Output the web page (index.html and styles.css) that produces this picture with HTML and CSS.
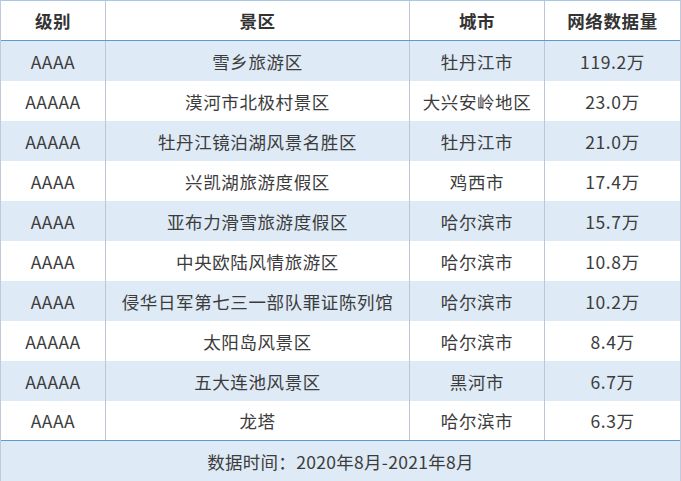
FILE: index.html
```html
<!DOCTYPE html>
<html lang="zh">
<head>
<meta charset="utf-8">
<link rel="stylesheet" href="styles.css">
</head>
<body>
<div class="table">
  <div class="row head">
    <div class="cell">级别</div>
    <div class="cell">景区</div>
    <div class="cell">城市</div>
    <div class="cell">网络数据量</div>
  </div>
  <div class="body">
    <div class="row alt"><div class="cell">AAAA</div><div class="cell">雪乡旅游区</div><div class="cell">牡丹江市</div><div class="cell">119.2万</div></div>
    <div class="row"><div class="cell">AAAAA</div><div class="cell">漠河市北极村景区</div><div class="cell">大兴安岭地区</div><div class="cell">23.0万</div></div>
    <div class="row alt"><div class="cell">AAAAA</div><div class="cell">牡丹江镜泊湖风景名胜区</div><div class="cell">牡丹江市</div><div class="cell">21.0万</div></div>
    <div class="row"><div class="cell">AAAA</div><div class="cell">兴凯湖旅游度假区</div><div class="cell">鸡西市</div><div class="cell">17.4万</div></div>
    <div class="row alt"><div class="cell">AAAA</div><div class="cell">亚布力滑雪旅游度假区</div><div class="cell">哈尔滨市</div><div class="cell">15.7万</div></div>
    <div class="row"><div class="cell">AAAA</div><div class="cell">中央欧陆风情旅游区</div><div class="cell">哈尔滨市</div><div class="cell">10.8万</div></div>
    <div class="row alt"><div class="cell">AAAA</div><div class="cell">侵华日军第七三一部队罪证陈列馆</div><div class="cell">哈尔滨市</div><div class="cell">10.2万</div></div>
    <div class="row"><div class="cell">AAAAA</div><div class="cell">太阳岛风景区</div><div class="cell">哈尔滨市</div><div class="cell">8.4万</div></div>
    <div class="row alt"><div class="cell">AAAAA</div><div class="cell">五大连池风景区</div><div class="cell">黑河市</div><div class="cell">6.7万</div></div>
    <div class="row"><div class="cell">AAAA</div><div class="cell">龙塔</div><div class="cell">哈尔滨市</div><div class="cell">6.3万</div></div>
  </div>
  <div class="foot">数据时间：2020年8月-2021年8月</div>
</div>
</body>
</html>
```
FILE: styles.css
```css
html, body {
  margin: 0;
  padding: 0;
  background: #ffffff;
}
.table {
  width: 681px;
  box-sizing: border-box;
  border-top: 1px solid #a9c6e6;
  border-left: 1px solid #c3c9dc;
  border-right: 1px solid #c3c9dc;
  font-family: "Noto Sans CJK SC", "Noto Sans", sans-serif;
  color: #3c3c3c;
}
.row {
  display: grid;
  grid-template-columns: 105px 304px 135px 135px;
  height: 40px;
}
.row .cell {
  display: flex;
  align-items: center;
  justify-content: center;
  border-right: 1px solid #bcc6d8;
  font-size: 17.5px;
  letter-spacing: 0.6px;
  white-space: nowrap;
}
.row .cell:last-child {
  border-right: none;
}
.head {
  height: 39px;
  border-bottom: 1px solid #5b9bd5;
}
.head .cell {
  font-weight: bold;
  color: #333333;
  font-size: 17.5px;
}
.alt {
  background: #deeaf6;
}
.body .row:last-child {
  height: 39px;
}
.foot {
  height: 40px;
  border-top: 1px solid #5b9bd5;
  background: #deeaf6;
  display: flex;
  align-items: center;
  justify-content: center;
  font-size: 17.5px;
  letter-spacing: 0.3px;
  color: #3c3c3c;
}
```
